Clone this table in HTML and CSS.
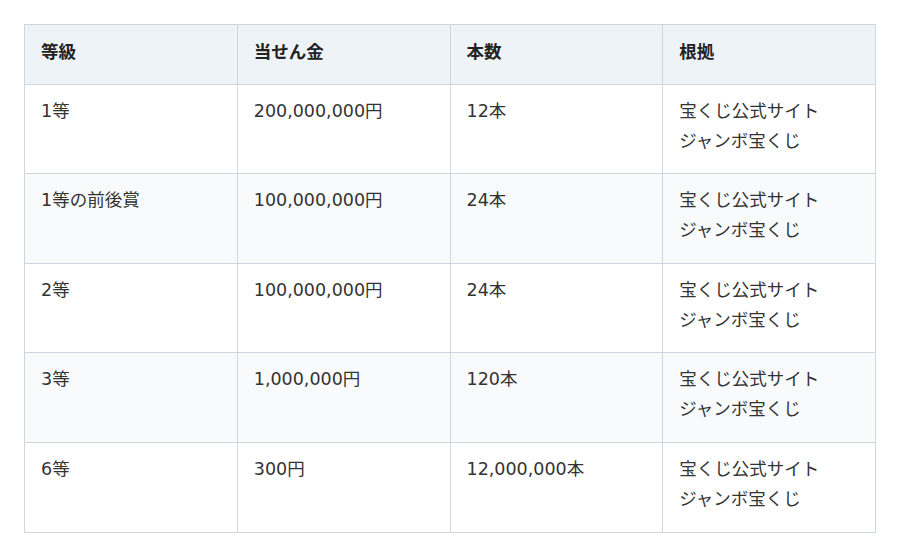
FILE: index.html
```html
<!DOCTYPE html>
<html lang="ja">
<head>
<meta charset="utf-8">
<link rel="stylesheet" href="styles.css">
</head>
<body>
<table class="prize-table">
  <thead>
    <tr><th>等級</th><th>当せん金</th><th>本数</th><th>根拠</th></tr>
  </thead>
  <tbody>
    <tr><td>1等</td><td>200,000,000円</td><td>12本</td><td>宝くじ公式サイト<br>ジャンボ宝くじ</td></tr>
    <tr><td>1等の前後賞</td><td>100,000,000円</td><td>24本</td><td>宝くじ公式サイト<br>ジャンボ宝くじ</td></tr>
    <tr><td>2等</td><td>100,000,000円</td><td>24本</td><td>宝くじ公式サイト<br>ジャンボ宝くじ</td></tr>
    <tr><td>3等</td><td>1,000,000円</td><td>120本</td><td>宝くじ公式サイト<br>ジャンボ宝くじ</td></tr>
    <tr><td>6等</td><td>300円</td><td>12,000,000本</td><td>宝くじ公式サイト<br>ジャンボ宝くじ</td></tr>
  </tbody>
</table>
</body>
</html>
```
FILE: styles.css
```css
html, body { margin: 0; padding: 0; background: #fff; }
body {
  padding: 24px;
  font-family: "DejaVu Sans", "Noto Sans CJK JP", sans-serif;
  font-size: 17.5px;
  color: #333;
}
.prize-table {
  width: 100%;
  border-collapse: collapse;
  table-layout: fixed;
  border: 1px solid #cfd6dd;
}
.prize-table th, .prize-table td {
  border: 1px solid #cfd6dd;
  padding: 11px 16px 17.6px;
  text-align: left;
  vertical-align: top;
  line-height: 30px;
}
.prize-table th {
  padding-top: 12px;
  padding-bottom: 16.6px;
  background: #eef3f8;
  font-weight: bold;
  color: #222;
}
.prize-table tbody tr:nth-child(even) td {
  background: #f8fafc;
}
```
